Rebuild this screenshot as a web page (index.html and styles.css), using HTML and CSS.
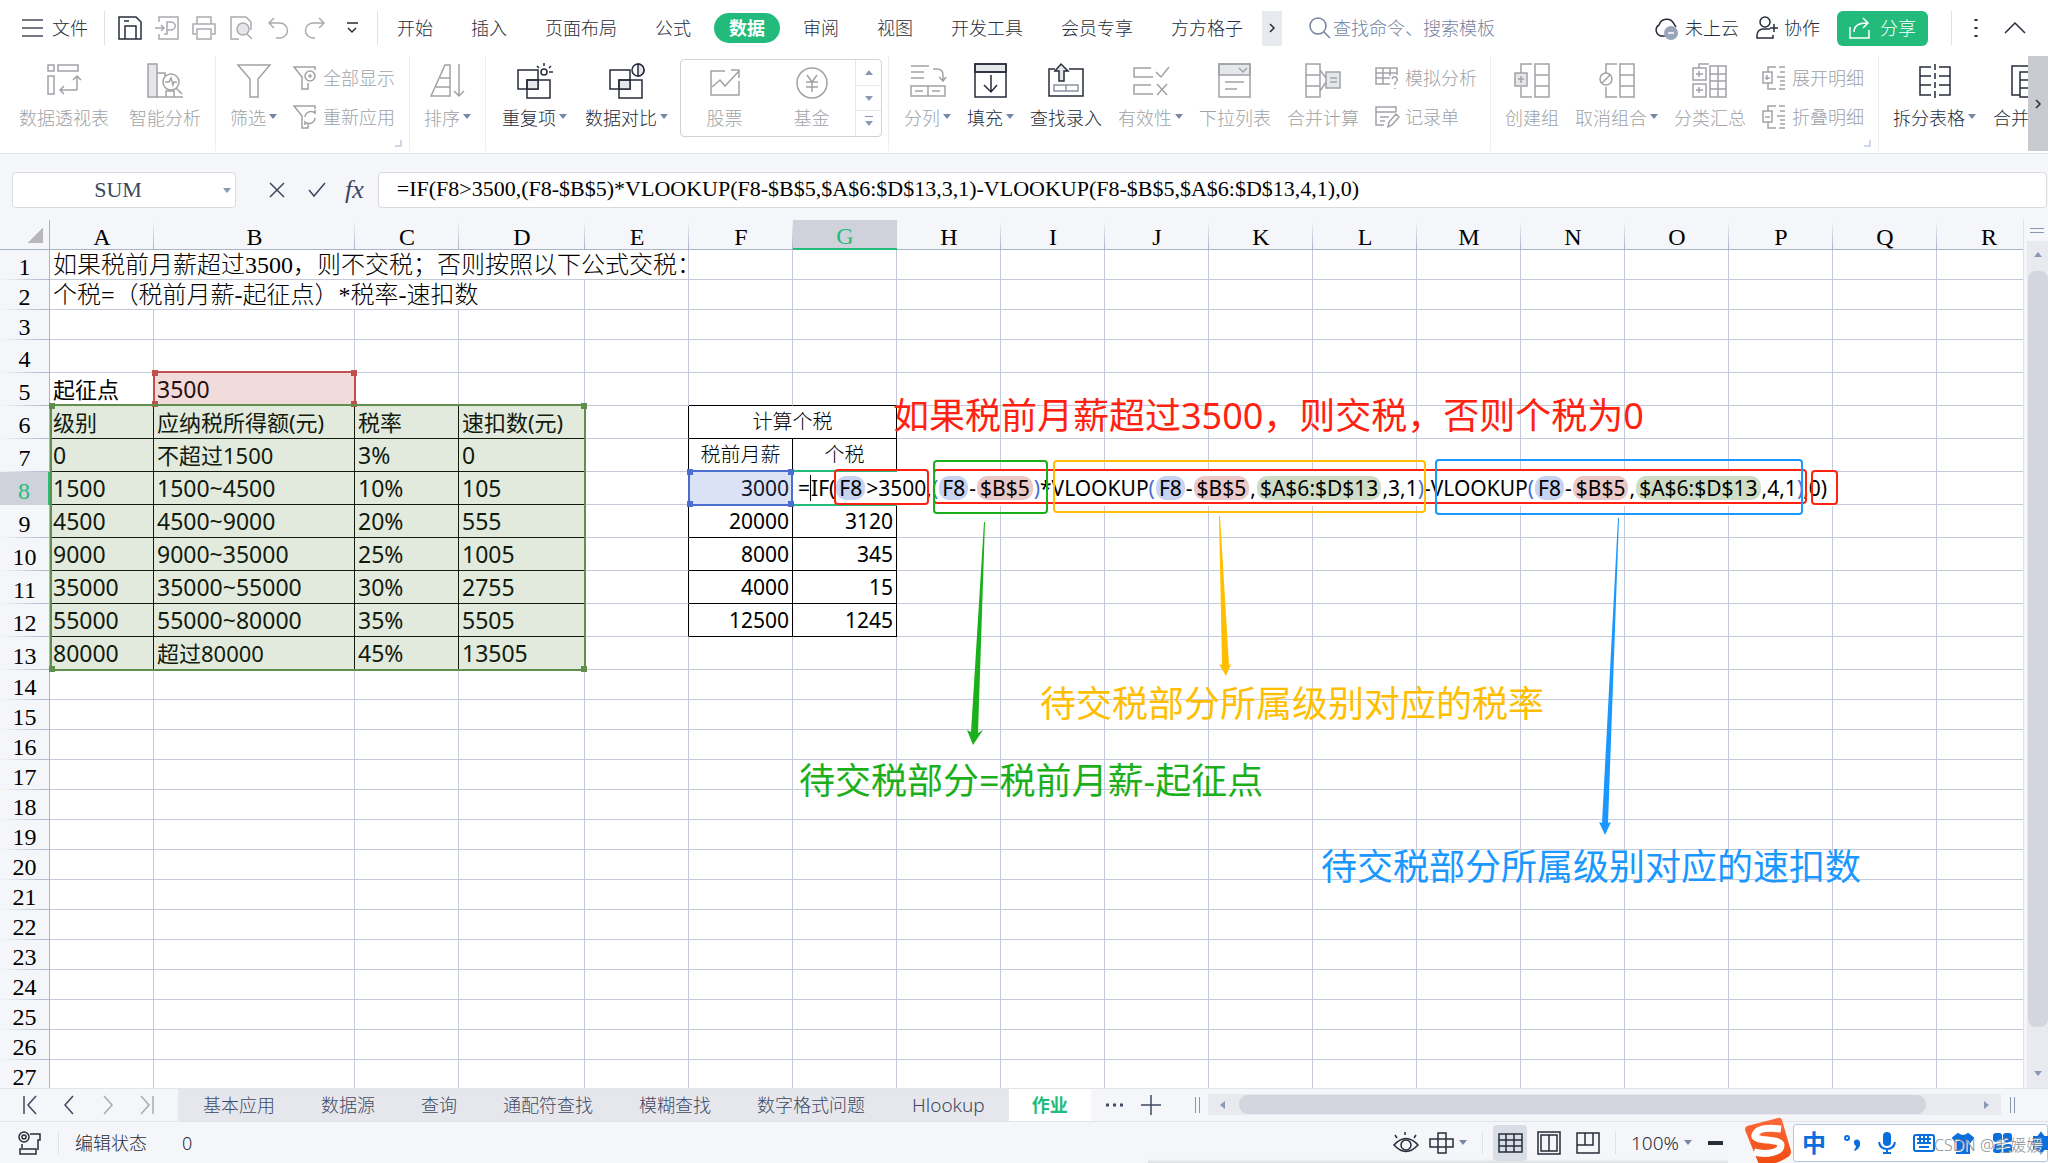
FILE: index.html
```html
<!DOCTYPE html>
<html lang="zh-CN">
<head>
<meta charset="utf-8">
<title>作业 - 个税计算</title>
<link rel="stylesheet" href="styles.css">
</head>
<body>
<div class="app">
  <header class="menubar">
    <button class="file"><svg width="21" height="20"><path d="M0 2h21M0 10h21M0 18h21"/></svg>文件</button>
    <span class="vline"></span>
    <div class="quick">
      <button aria-label="保存"><svg class="dark" width="24" height="24"><path d="M1 1h17l5 5v17H1zM7 23V10h11v13M6 5h5"/></svg></button>
      <button aria-label="输出"><svg width="24" height="24"><path d="M4 6V1h19v22H4v-5M0 12h9M6 9l3 3-3 3M12 6h3a4 3 0 010 8h-3zM12 14v4h-3"/></svg></button>
      <button aria-label="打印"><svg width="24" height="24"><path d="M5 8V1h14v7M4 18H1V8h22v10h-3M5 13h14v10H5z"/></svg></button>
      <button aria-label="预览"><svg width="24" height="24"><path d="M10 23H2V1h15l5 5v8" /><circle cx="14" cy="13" r="6" class="tint"/><path d="M18 18l5 5"/></svg></button>
      <button aria-label="撤销"><svg width="24" height="24"><path d="M8 2L3 7l5 5M3 7h11a7 7 0 010 15h-4"/></svg></button>
      <button aria-label="恢复"><svg width="24" height="24"><path d="M16 2l5 5-5 5M21 7H10a7 7 0 000 15h2"/></svg></button>
      <button aria-label="更多"><svg class="dark" width="24" height="24"><path d="M7 7h11M8 12l4 4 4-4"/></svg></button>
    </div>
    <span class="vline"></span>
    <nav class="menus">
      <button>开始</button><button>插入</button><button>页面布局</button><button>公式</button><button class="on">数据</button><button>审阅</button><button>视图</button><button>开发工具</button><button>会员专享</button><button>方方格子</button>
    </nav>
    <button class="more" aria-label="更多选项卡"><svg width="8" height="10"><path d="M2 1l4 4-4 4"/></svg></button>
    <label class="find"><svg width="24" height="24"><circle cx="10" cy="10" r="8"/><path d="M16 16l6 6"/></svg><input type="text" placeholder="查找命令、搜索模板" aria-label="查找命令"></label>
    <div class="account">
      <button><svg width="25" height="24"><path d="M11 20H7A6 6 0 015 9a8 8 0 0115-1l2 3"/><circle cx="17" cy="17" r="7" fill="#9aa4b8" stroke="none"/><path d="M14 17h6" stroke="#fff"/></svg>未上云</button>
      <button><svg width="22" height="24"><circle cx="9" cy="6" r="5"/><path d="M14 13H7a6 6 0 00-6 6v3h16v-3M18 8v8M14 12h8"/></svg>协作</button>
      <button class="share"><svg width="22" height="22"><path d="M1 10v11h19V13M5 15c0-7 5-9 13-9M14 1l5 5-5 5"/></svg>分享</button>
      <span class="vline"></span>
      <button class="kebab" aria-label="菜单"><svg width="6" height="22"><path d="M3 2v2M3 10v2M3 18v2" stroke-width="3"/></svg></button>
      <button aria-label="收起"><svg width="22" height="12"><path d="M1 11L11 1l10 10"/></svg></button>
    </div>
  </header>

  <section class="ribbon">
    <div class="group wide">
      <button class="tool"><svg width="36" height="36"><path d="M2 2h6v6H2zM12 2h20v6H12zM2 13h6v18H2zM31 27V13M27 17l4-4 4 4M31 27H14M18 23l-4 4 4 4"/></svg><span>数据透视表</span></button>
      <button class="tool"><svg width="36" height="36"><path d="M1 1h9v33H1z" class="tint"/><path d="M10 10h8v3M10 34h26M19 34v-6h8v6"/><circle cx="24" cy="19" r="8"/><path d="M29 25l6 6M18 19h4l2-4 2 7 1-3h3"/></svg><span>智能分析</span></button>
    </div>
    <div class="group">
      <button class="tool"><svg width="36" height="36"><path d="M2 2h32L22 16v18h-8V16z"/></svg><span class="drop">筛选</span></button>
      <div class="stack">
        <button><svg width="24" height="24"><path d="M22 4V1H1l8 10v12h6v-6"/><circle cx="17" cy="10" r="5"/><circle cx="17" cy="10" r="1"/></svg>全部显示</button>
        <button><svg width="24" height="24"><path d="M22 4V1H1l8 10v12h6v-4M12 12a6 6 0 0110-4v-3M22 13a6 6 0 01-10 4v3"/></svg>重新应用</button>
      </div>
      <i class="corner"></i>
    </div>
    <div class="group">
      <button class="tool"><svg width="36" height="36"><path d="M1 33L15 2h5v31zM6 24h14M10 15h10M29 1v32M24 28l5 5 5-5"/></svg><span class="drop">排序</span></button>
    </div>
    <div class="group last">
      <button class="tool dark"><svg width="36" height="36"><path d="M1 7h20v19H1z"/><path d="M10 17h11v9H10z" class="tint"/><path d="M10 17h23v18H10z"/><circle cx="27" cy="9" r="3"/><path d="M27 0v3M20 3l2 2M34 3l-2 2M32 9h4"/></svg><span class="drop">重复项</span></button>
      <button class="tool dark"><svg width="36" height="36"><path d="M1 7h20v19H1z"/><path d="M10 17h11v9H10z" class="tint"/><path d="M10 17h23v18H10z"/><circle cx="29" cy="7" r="6" fill="#fff"/><path class="tint" d="M29 1a6 6 0 010 12z"/></svg><span class="drop">数据对比</span></button>
    </div>
    <div class="gallery">
      <button class="tool"><svg width="32" height="32"><path d="M16 4H2v24h28V14M3 20l8-7 5 6L30 4M22 3h8v8"/></svg><span>股票</span></button>
      <button class="tool"><svg width="32" height="32"><circle cx="16" cy="16" r="15"/><path d="M11 8l5 7 5-7M10 15h12M10 20h12M16 15v10"/></svg><span>基金</span></button>
      <div class="steps"><button aria-label="上"><i class="up"></i></button><button aria-label="下"><i class="down"></i></button><button aria-label="展开"><i class="down bar"></i></button></div>
    </div>
    <div class="group tools">
      <button class="tool"><svg width="36" height="36"><path d="M1 3h18M1 9h13M1 15h13M23 6h4q6 0 6 6v6M29 14l4 4 3-4M1 23h34v10H1zM18 23v10M5 28h8M22 28h8"/></svg><span class="drop">分列</span></button>
      <button class="tool dark"><svg width="36" height="36"><path d="M2 1h31v8H2z" class="tint"/><path d="M2 1h31v33H2zM2 9h31M18 12v17M11 22l7 7 6-7"/></svg><span class="drop">填充</span></button>
      <button class="tool dark"><svg width="36" height="36"><path d="M7 6H1v27h34V6H21"/><path d="M11 18V8H7l6-7 7 7h-4v10z" class="tint"/><path d="M6 22h24v6H6zM18 22v6" stroke="#8c93a0"/></svg><span>查找录入</span></button>
      <button class="tool"><svg width="36" height="36"><path d="M18 5H1v9h19M18 22H1v9h19M23 9l5 5 8-10M24 21l10 11M34 21L24 32"/></svg><span class="drop">有效性</span></button>
      <button class="tool"><svg width="36" height="36"><path d="M2 1h31v11H2z" class="tint"/><path d="M2 1h31v33H2zM22 5l4 4 4-4M8 19h19M8 26h12"/></svg><span>下拉列表</span></button>
      <button class="tool"><svg width="36" height="36"><path d="M1 1h14v33H1zM1 12h14M1 23h14M15 7l6 8M15 28l6-9"/><path d="M21 9h14v16H21z" class="tint"/><path d="M25 15h7M25 19h7"/></svg><span>合并计算</span></button>
      <div class="stack">
        <button><svg width="24" height="24"><path d="M15 18H1V2h21v7M1 7h21M1 12h14M8 2v16M15 2v8M17 13q1-3 4-2 3 3-1 6v2M20 22v1"/></svg>模拟分析</button>
        <button><svg width="24" height="24"><path d="M9 20H1V2h20v5M1 7h20M5 12h9M5 16h5M13 22l1-5 7-8 3 3-7 8z"/></svg>记录单</button>
      </div>
    </div>
    <div class="group">
      <button class="tool"><svg width="36" height="36"><path d="M21 1h14v33H21zM21 12h14M21 23h14M18 1H7v9M7 24v10h11"/><path d="M1 10h12v13H1z" class="tint"/><path d="M4 16h6M7 13v7"/></svg><span>创建组</span></button>
      <button class="tool"><svg width="36" height="36"><path d="M21 1h14v33H21zM21 12h14M21 23h14M18 1H7v9M7 24v10h11"/><circle cx="7" cy="16" r="6"/><path d="M3 20l8-8"/></svg><span class="drop">取消组合</span></button>
      <button class="tool"><svg width="36" height="36"><path d="M18 3h16v31H18zM26 3v31M18 11h16M18 18h16M18 26h16M7 5V1h10M1 5h13v12H1zM1 21h13v13H1zM4 11h7M7 8v6M4 27h7M7 24v6"/></svg><span>分类汇总</span></button>
      <div class="stack">
        <button><svg width="24" height="24"><path d="M14 1H6v5M6 17v6h8M1 6h9v11H1zM3 12h5M5 9v5M17 1h6M18 6h5M15 11h8M18 15h5M18 19h5M17 23h6"/></svg>展开明细</button>
        <button><svg width="24" height="24"><path d="M14 1H6v5M6 17v6h8M1 6h9v11H1zM3 12h5M17 1h6M18 6h5M15 11h8M18 15h5M18 19h5M17 23h6"/></svg>折叠明细</button>
      </div>
      <i class="corner"></i>
    </div>
    <div class="group tail">
      <button class="tool dark"><svg width="36" height="36"><path d="M14 4H3v28h11M22 4h11v28H22M3 13h11M3 22h11M22 13h11M22 22h11M18 1v6M18 10v6M18 19v6M18 28v7"/></svg><span class="drop">拆分表格</span></button>
      <button class="tool dark"><svg width="36" height="36"><path d="M9 32H1V3h16M9 34V9h22v25zM9 17h22M9 25h22"/></svg><span>合并表格</span></button>
    </div>
    <button class="slide" aria-label="向右滚动"><svg width="8" height="10"><path d="M2 1l4 4-4 4"/></svg></button>
  </section>

  <section class="formula">
    <div class="namebox"><input type="text" value="SUM" aria-label="名称框"><i class="down"></i></div>
    <button aria-label="取消"><svg width="18" height="18"><path d="M2 2l14 14M16 2L2 16"/></svg></button>
    <button aria-label="输入"><svg width="18" height="18"><path d="M1 9l5 6L17 2"/></svg></button>
    <button class="fx" aria-label="插入函数">fx</button>
    <input class="expr" type="text" aria-label="编辑栏" value="=IF(F8&gt;3500,(F8-$B$5)*VLOOKUP(F8-$B$5,$A$6:$D$13,3,1)-VLOOKUP(F8-$B$5,$A$6:$D$13,4,1),0)">
  </section>

  <main class="work">
    <div class="sheet">
      <table class="grid">
        <colgroup id="cols"></colgroup>
        <thead id="head"></thead>
        <tbody id="body"></tbody>
      </table>
      <div class="layer">
        <div class="range red"><i></i><i></i><i></i><i></i></div>
        <div class="range green"><i></i><i></i><i></i><i></i></div>
        <div class="range blue"><i></i><i></i><i></i><i></i></div>
        <div class="editor">=<i class="caret"></i>IF(<b class="b">F8</b>&gt;3500,<u>(</u><b class="b">F8</b>-<b class="r">$B$5</b><u>)</u>*VLOOKUP<u>(</u><b class="b">F8</b>-<b class="r">$B$5</b>,<b class="g">$A$6:$D$13</b>,3,1<u>)</u>-VLOOKUP<u>(</u><b class="b">F8</b>-<b class="r">$B$5</b>,<b class="g">$A$6:$D$13</b>,4,1<u>)</u>,0)</div>
        <div class="mark m1"></div><div class="mark m2"></div><div class="mark m3"></div><div class="mark m4"></div><div class="mark m5"></div><div class="mark m6"></div>
        <svg class="arrows" width="1840" height="640">
          <path fill="#1bb01b" d="M984 302l1 0-7 211 5-3-10 15-6-15 4 2z"/>
          <path fill="#ffbf00" d="M1219 296l1 0 9 149 2-1-5 12-7-12 3 1z"/>
          <path fill="#1a98ff" d="M1618 298l1 0-11 305 3-1-6 13-6-13 3 1z"/>
        </svg>
        <p class="note n1">如果税前月薪超过3500，则交税，否则个税为0</p>
        <p class="note n2">待交税部分所属级别对应的税率</p>
        <p class="note n3">待交税部分=税前月薪-起征点</p>
        <p class="note n4">待交税部分所属级别对应的速扣数</p>
      </div>
    </div>
    <div class="vscroll"><i class="split"></i><div class="track"><i class="up"></i><span class="thumb"></span><i class="down"></i></div></div>
  </main>

  <footer class="tabs">
    <div class="step">
      <button aria-label="首个"><svg width="16" height="20"><path d="M2 1v18M14 1L6 10l8 9"/></svg></button>
      <button aria-label="上一个"><svg width="16" height="20"><path d="M12 1L4 10l8 9"/></svg></button>
      <button class="off" aria-label="下一个"><svg width="16" height="20"><path d="M4 1l8 9-8 9"/></svg></button>
      <button class="off" aria-label="末个"><svg width="16" height="20"><path d="M2 1l8 9-8 9M14 1v18"/></svg></button>
    </div>
    <nav class="names"><button>基本应用</button><button>数据源</button><button>查询</button><button>通配符查找</button><button>模糊查找</button><button>数字格式问题</button><button class="latin">Hlookup</button><button class="on">作业</button></nav>
    <button class="dots" aria-label="更多工作表"><svg width="20" height="20"><path d="M1 10h3M8 10h3M15 10h3" stroke-width="3"/></svg></button>
    <button class="add" aria-label="新建工作表"><svg width="20" height="20"><path d="M10 0v20M0 10h20"/></svg></button>
    <span class="grip"></span>
    <div class="hscroll"><i class="left"></i><span class="thumb"></span><i class="right"></i></div>
    <span class="grip"></span>
  </footer>

  <footer class="status">
    <svg width="24" height="26"><circle cx="6" cy="7" r="5"/><circle cx="6" cy="7" r="2"/><path d="M12 4h10v6h-2v10M4 14v4M2 19h16v5H2z"/></svg>
    <span class="vline"></span>
    <span class="state">编辑状态</span><span>0</span>
    <div class="views">
      <button aria-label="护眼模式"><svg width="25" height="24"><path d="M1 14q12-13 24 0-12 13-24 0zM2 4l2 3M12 1v3M23 4l-2 3"/><circle cx="13" cy="14" r="5"/></svg></button>
      <button class="drop" aria-label="阅读模式"><svg width="25" height="24"><path d="M9 2h8v20H9zM1 8h23v8H1z"/></svg></button>
      <span class="vline"></span>
      <button class="on" aria-label="普通视图"><svg width="24" height="24"><path d="M1 3h23v18H1zM1 9h23M1 15h23M8 3v18M16 3v18"/></svg></button>
      <button aria-label="分页预览"><svg width="24" height="24"><path d="M1 1h22v22H1zM4 4h16v16H4zM12 4v16"/></svg></button>
      <button aria-label="分屏"><svg width="24" height="24"><path d="M1 2h22v20H1zM1 14h16V2M9 2v12"/></svg></button>
      <span class="vline"></span>
      <button class="drop zoom">100%</button>
      <button aria-label="缩小"><svg width="18" height="24"><path d="M1 12h15" stroke-width="4"/></svg></button>
    </div>
    <div class="ime">
      <svg class="logo" width="50" height="48" viewBox="0 0 50 48"><defs><linearGradient id="o" x1="0" y1="0" x2="0" y2="1"><stop offset="0" stop-color="#ff6a3a"/><stop offset="1" stop-color="#f04a10"/></linearGradient></defs><path fill="url(#o)" d="M3 9L34 1q3-1 4 2l9 31q0 4-3 6-12 8-26 8-3 0-4-3L1 13q0-3 2-4z"/><path fill="none" stroke="#fff" stroke-width="7" d="M37 12Q14 9 11 18c-2 7 26 3 26 10 0 8-15 10-27 7"/></svg>
      <span class="zh">中</span>
      <svg width="18" height="24"><circle cx="4" cy="7" r="2"/><path fill="#0a6fdc" stroke="none" d="M11 12a3 3 0 016-1q1 6-5 9l-1-1q2-2 2-4-2-1-2-3z"/></svg>
      <svg width="18" height="24"><rect x="5" y="1" width="8" height="14" rx="4" fill="#0a6fdc" stroke="none"/><path d="M1 11q1 7 8 7t8-7M9 18v3M5 22h8"/></svg>
      <svg width="22" height="24"><rect x="1" y="4" width="20" height="16" rx="2"/><path d="M4 8h14M4 12h14M6 16h10M7 5v8M11 5v8M15 5v8"/></svg>
      <svg width="22" height="24"><path fill="#0a6fdc" d="M6 3q5 4 10 0l5 4-3 4-1-1v12H5V10l-1 1-3-4z"/></svg>
      <svg width="22" height="24"><g fill="#0a6fdc" stroke="none"><rect x="2" y="2" width="9" height="9" rx="3"/><rect x="12" y="2" width="9" height="9" rx="3"/><rect x="2" y="13" width="9" height="9" rx="3"/><rect x="12" y="13" width="9" height="9" rx="3"/></g></svg>
      <svg width="22" height="24"><path fill="#0a6fdc" d="M11 2l3 4h4v4l3 2-3 3v3h-4l-3 4-3-4H4v-3l-2-3 2-2V6h4z"/></svg>
      <span class="water">CSDN @毛媛媛</span>
    </div>
  </footer>
</div>
<script src="sheet.js"></script>
</body>
</html>
```
FILE: sheet.js
```js
const widths = [50, 104, 201, 104, 126, 104, 104, 104];
while (widths.length < 19) widths.push(104);
const letters = 'ABCDEFGHIJKLMNOPQR';

document.getElementById('cols').innerHTML =
  widths.map(w => `<col style="width:${w}px">`).join('');

document.getElementById('head').innerHTML = '<tr><th class="all"></th>' +
  [...letters].map(l => `<th${l === 'G' ? ' class="sel"' : ''}>${l}</th>`).join('') + '</tr>';

const brackets = [
  ['级别', '应纳税所得额(元)', '税率', '速扣数(元)'],
  ['0', '不超过1500', '3%', '0'],
  ['1500', '1500~4500', '10%', '105'],
  ['4500', '4500~9000', '20%', '555'],
  ['9000', '9000~35000', '25%', '1005'],
  ['35000', '35000~55000', '30%', '2755'],
  ['55000', '55000~80000', '35%', '5505'],
  ['80000', '超过80000', '45%', '13505'],
];
const pay = { 8: ['3000', ''], 9: ['20000', '3120'], 10: ['8000', '345'], 11: ['4000', '15'], 12: ['12500', '1245'] };

// text, class and column span of the cell at (row, col)
function cell(r, c) {
  if (r === 1 && c === 0) return ['如果税前月薪超过3500，则不交税；否则按照以下公式交税：', 'song', 5];
  if (r === 2 && c === 0) return ['个税=（税前月薪-起征点）*税率-速扣数', 'song', 4];
  if (r === 5 && c === 0) return ['起征点', 'big', 1];
  if (r === 5 && c === 1) return ['3500', 'big digits', 1];
  if (r >= 6 && r <= 13 && c < 4) {
    const text = brackets[r - 6][c];
    return [text, /^[\d~%]+$/.test(text) ? 'big digits ink' : 'big ink', 1];
  }
  if (r === 5 && (c === 5 || c === 6)) return ['', 'inkb', 1];
  if (r >= 6 && r <= 12 && c === 4) return ['', 'inkr', 1];
  if (r === 6 && c === 5) return ['计算个税', 'mid ink', 2];
  if (r === 7 && c === 5) return ['税前月薪', 'mid ink', 1];
  if (r === 7 && c === 6) return ['个税', 'mid ink', 1];
  if (pay[r] && (c === 5 || c === 6)) return [pay[r][c - 5], 'num ink', 1];
  return ['', '', 1];
}

let rows = '';
for (let r = 1; r <= 27; r++) {
  const tall = r >= 4 && r <= 13;
  rows += `<tr class="${tall ? 'tall' : ''}"><th${r === 8 ? ' class="sel"' : ''}>${r}</th>`;
  for (let c = 0; c < 18;) {
    const [text, cls, span] = cell(r, c);
    rows += `<td class="${cls}"${span > 1 ? ` colspan="${span}"` : ''}>${text}</td>`;
    c += span;
    if (r === 6 && c === 7) continue;
  }
  rows += '</tr>';
}
document.getElementById('body').innerHTML = rows;
```
FILE: styles.css
```css
* { box-sizing: border-box; }
body { margin: 0; font: 300 18px/24px "Noto Sans", "Noto Sans CJK SC", sans-serif; color: #262c3a; background: #f5f6f9; }
button, input { font: inherit; color: inherit; background: none; border: 0; padding: 0; margin: 0; }
button { display: flex; align-items: center; white-space: nowrap; }
svg { display: block; flex: none; fill: none; stroke: currentColor; stroke-width: 1.5; overflow: visible; }
.tint { fill: #e6e7ea; }
.app { display: flex; flex-direction: column; height: 100vh; overflow: hidden; }
.vline { width: 1px; height: 34px; background: #dfe1e6; flex: none; }
.up, .down, .left, .right { display: block; flex: none; border: 4px solid transparent; }
.up { border-top: 0; border-bottom: 5px solid #8a98b4; }
.down { border-bottom: 0; border-top: 5px solid #8a98b4; }
.left { border-left: 0; border-right: 5px solid #8a98b4; }
.right { border-right: 0; border-left: 5px solid #8a98b4; }

.menubar { display: flex; align-items: center; height: 56px; flex: none; padding: 0 22px; background: #fff; }
.file { gap: 9px; margin-right: 16px; }
.file svg { stroke: #4a4f5a; }
.quick { display: flex; gap: 13px; margin: 0 13px; color: #a9abb0; }
.quick .dark { color: #262c3a; }
.menus { display: flex; align-items: center; }
.menus button { padding: 0 19px; }
.menus .on { height: 30px; padding: 0 15px; margin: 0 4px; border-radius: 15px; background: #22bb7c; color: #fff; font-weight: 700; }
.more { width: 20px; height: 35px; justify-content: center; background: #e7eaef; }
.find { display: flex; align-items: center; gap: 1px; margin-left: 26px; color: #7482a0; }
.find input { width: 200px; }
.find input::placeholder { color: #7482a0; opacity: 1; }
.account { display: flex; align-items: center; gap: 17px; margin-left: auto; }
.account button { gap: 6px; }
.account .share { height: 35px; gap: 9px; padding: 0 12px; border-radius: 6px; background: #22bb7c; color: #fff; }
.account .vline { margin: 0 4px 0 6px; }
.account .kebab { margin-right: 8px; }

.ribbon { display: flex; height: 98px; flex: none; background: #fff; border-bottom: 1px solid #e4e6ea; padding-left: 5px; color: #a0a2a6; }
.group { position: relative; display: flex; flex: none; gap: 16px; height: 95px; padding: 0 14px; border-right: 1px solid #eceef1; }
.group.wide { gap: 20px; }
.group.last { gap: 18px; padding: 0 12px 0 16px; border: 0; }
.group.tools { padding: 0 13px 0 15px; }
.group.tail { flex: 1 1 0; min-width: 0; gap: 17px; overflow: hidden; border: 0; padding-right: 0; }
.tool { flex-direction: column; flex: none; gap: 7px; padding-top: 7px; height: 76px; }
.dark { color: #262c3a; }
.drop { display: flex; align-items: center; gap: 3px; }
.drop::after { content: ""; border: 4px solid transparent; border-bottom: 0; border-top: 5px solid #7886a3; }
.tool .drop::after { margin-top: -4px; }
.stack { display: flex; flex-direction: column; gap: 15px; padding-top: 10px; flex: none; }
.stack button { gap: 6px; }
.corner { position: absolute; right: 7px; bottom: 4px; width: 7px; height: 7px; border: solid #cfd8ea; border-width: 0 2px 2px 0; }
.gallery { display: flex; flex: none; width: 202px; height: 78px; margin: 3px 6px 0 0; border: 1px solid #cfd1d6; border-radius: 4px; }
.gallery .tool { width: 87px; padding-top: 7px; height: 76px; }
.steps { display: flex; flex-direction: column; flex: 1; border-left: 1px solid #e6e8ec; }
.steps button { flex: 1; justify-content: center; border-bottom: 1px solid #e6e8ec; }
.steps button:last-child { border: 0; }
.bar { position: relative; }
.bar::before { content: ""; position: absolute; left: -4px; top: -10px; width: 8px; height: 1px; background: #8a98b4; }
.slide { width: 20px; height: 95px; flex: none; justify-content: center; background: #c9cbd1; color: #262c3a; }
.gallery + .group { border-left: 1px solid #eceef1; }

.formula { display: flex; align-items: center; height: 66px; flex: none; padding: 6px 1px 0 12px; color: #3c4660; font-family: "Liberation Serif", "Noto Sans CJK SC", serif; font-size: 22px; }
.namebox { display: flex; align-items: center; width: 224px; height: 36px; padding-right: 4px; margin-right: 32px; background: #fff; border: 1px solid #d8dade; border-radius: 4px; }
.namebox input { flex: 1; min-width: 0; text-align: center; }
.formula button { margin-right: 22px; }
.formula .fx { font-style: italic; font-size: 26px; margin: 0 14px 0 -3px; }
.expr { flex: 1; min-width: 0; height: 36px; padding: 0 18px 3px; background: #fff; border: 1px solid #d8dade; border-radius: 4px; color: #000; }

.work { display: flex; flex: 1; min-height: 0; }
.sheet { position: relative; flex: 1; min-width: 0; overflow: hidden; background: #fff; border-right: 1px solid #dfe2e8; }
.grid { table-layout: fixed; width: 1922px; border-spacing: 0; color: #000; }
.grid th { padding: 4px 0 0; font: 400 24px/24px "Liberation Serif", serif; background: #f5f6f9 linear-gradient(to right, transparent, #a9b4c8) bottom / 100% 1px no-repeat; border-right: 1px solid #a9b4c8; }
.grid thead th { height: 30px; background: #f5f6f9 linear-gradient(to bottom, transparent, #a9b4c8) right / 1px 100% no-repeat; border: 0; border-bottom: 1px solid #a9b4c8; }
.grid thead .all { background: linear-gradient(135deg, transparent 50%, #b8b8b8 50%) 28px 8px / 15px 15px no-repeat #f5f6f9; border-right: 1px solid #a9b4c8; }
.grid thead .sel { background: #cfd2da; color: #22bb7c; border-bottom: 2px solid #22bb7c; }
.grid tbody .sel { background: #cfd2da; color: #22bb7c; border-right: 2px solid #22bb7c; }
.grid tbody tr { height: 30px; }
.grid tbody .tall { height: 33px; }
.grid td { padding: 0 3px; white-space: nowrap; border: solid #c5cada; border-width: 0 1px 1px 0; line-height: 24px; }
.grid .song { font: 300 24px/28px "Liberation Serif", "Noto Sans CJK SC", serif; }
.grid .big { font-size: 22px; font-weight: 400; }
.grid .digits { font-size: 23px; }
.grid .mid { font-size: 20px; text-align: center; }
.grid .num { font-size: 21px; font-weight: 400; text-align: right; }
.grid .ink { border-color: #000; }
.grid .inkb { border-bottom-color: #000; }
.grid .inkr { border-right-color: #000; }

.layer { position: absolute; inset: 0; }
.range { position: absolute; border: 2px solid; }
.range i { position: absolute; width: 6px; height: 6px; background: currentColor; }
.range i:nth-child(1) { left: -3px; top: -3px; }
.range i:nth-child(2) { right: -3px; top: -3px; }
.range i:nth-child(3) { left: -3px; bottom: -3px; }
.range i:nth-child(4) { right: -3px; bottom: -3px; }
.range.red { left: 153px; top: 151px; width: 203px; height: 35px; color: #c0504d; background: rgba(192, 80, 77, .2); }
.range.green { left: 50px; top: 184px; width: 536px; height: 267px; color: #5f8f4a; background: rgba(95, 143, 74, .19); }
.range.blue { left: 688px; top: 250px; width: 105px; height: 36px; color: #4a6fd0; background: rgba(74, 111, 208, .2); }
.editor { position: absolute; left: 794px; top: 250px; display: flex; align-items: center; width: 1039px; height: 36px; padding-left: 4px; background: linear-gradient(#22bb7c, #22bb7c) left top / 103px 2px no-repeat, linear-gradient(#22bb7c, #22bb7c) left bottom / 103px 2px no-repeat, #fff; color: #000; font-size: 21px; font-weight: 400; white-space: nowrap; }
.editor b { margin: 0 1px; padding: 0 3px; border-radius: 10px; font-weight: 400; }
.editor .b { background: #c7d3f0; }
.editor .r { background: #ecc9c9; }
.editor .g { background: #cfdcc6; }
.editor u { color: #4a6fd0; text-decoration: none; }
.caret { width: 1px; height: 26px; background: #000; }
.mark { position: absolute; border: 2px solid; border-radius: 4px; }
.m1 { left: 834px; top: 249px; width: 95px; height: 36px; color: #f21; }
.m2 { left: 933px; top: 249px; width: 874px; height: 35px; color: #f21; }
.m3 { left: 933px; top: 240px; width: 115px; height: 54px; color: #1bb01b; }
.m4 { left: 1053px; top: 240px; width: 373px; height: 53px; color: #ffbf00; }
.m5 { left: 1435px; top: 239px; width: 368px; height: 56px; color: #1a98ff; }
.m6 { left: 1811px; top: 250px; width: 27px; height: 35px; color: #f21; }
.arrows { position: absolute; left: 0; top: 0; stroke: none; }
.note { position: absolute; margin: 0; font-size: 36px; line-height: 48px; font-weight: 400; white-space: nowrap; }
.n1 { left: 893px; top: 172px; color: #f21; }
.n2 { left: 1040px; top: 460px; color: #ffbf00; }
.n3 { left: 799px; top: 537px; color: #1bb01b; }
.n4 { left: 1321px; top: 623px; color: #1a98ff; }

.vscroll { display: flex; flex-direction: column; width: 24px; flex: none; padding-left: 3px; }
.split { height: 5px; margin: 8px 4px 8px 3px; border: solid #8a98b4; border-width: 1px 0; }
.track { display: flex; flex-direction: column; align-items: center; flex: 1; padding: 11px 0 12px; background: #e8eaf0; }
.track .thumb { width: 20px; flex: 1; margin: 14px 0 44px; border-radius: 8px; background: #d3d6de; }

.tabs { display: flex; align-items: stretch; height: 34px; flex: none; border: solid #e2e4e9; border-width: 1px 0; color: #3f4962; }
.tabs button { justify-content: center; }
.step { display: flex; gap: 23px; width: 178px; padding-left: 22px; }
.step .off { color: #a9abb0; }
.names { display: flex; padding-left: 2px; background: #e6e7ed; }
.names button { padding: 0 23px; }
.names .latin { font-size: 19px; padding: 0 24px; }
.names .on { background: #fff; color: #22bb7c; font-weight: 700; }
.dots { width: 48px; }
.add { width: 24px; }
.grip { width: 5px; height: 16px; align-self: center; margin: 0 8px 0 32px; border: solid #8a98b4; border-width: 0 1px; }
.hscroll { display: flex; align-items: center; flex: 1; height: 21px; margin: 5px 0; padding: 0 12px; background: #e8eaf0; }
.hscroll .thumb { flex: 1; height: 19px; margin: 0 58px 0 14px; border-radius: 9px; background: #d3d6de; }
.hscroll + .grip { margin: 0 33px 0 9px; }

.status { display: flex; align-items: center; height: 41px; flex: none; padding-left: 18px; background: linear-gradient(transparent, #dcdde0) right 320px bottom / 580px 4px no-repeat; }
.status > .vline { height: 22px; margin: 0 16px; }
.state { margin-right: 35px; }
.views { display: flex; align-items: center; margin-left: auto; gap: 15px; }
.views .vline { height: 22px; }
.views .on { height: 36px; padding: 0 5px; margin: 0 -5px; background: #d9dde5; border-radius: 4px; }
.views .drop { gap: 5px; margin-left: -4px; }
.views .zoom { margin-left: 0; font-size: 19px; }
.ime { position: relative; display: flex; align-items: center; gap: 17px; height: 38px; width: 255px; padding-left: 8px; margin-left: 68px; background: #fff; border: 1px solid #b5c8e2; border-radius: 3px; color: #0a6fdc; }
.ime svg { stroke-width: 2; }
.ime .logo { position: absolute; left: -50px; top: -8px; stroke: none; }
.zh { font-size: 24px; font-weight: 700; }
.water { position: absolute; left: 140px; top: 8px; color: #8b8f96; text-shadow: 1px 1px #fff; font-size: 16px; white-space: nowrap; }
```
